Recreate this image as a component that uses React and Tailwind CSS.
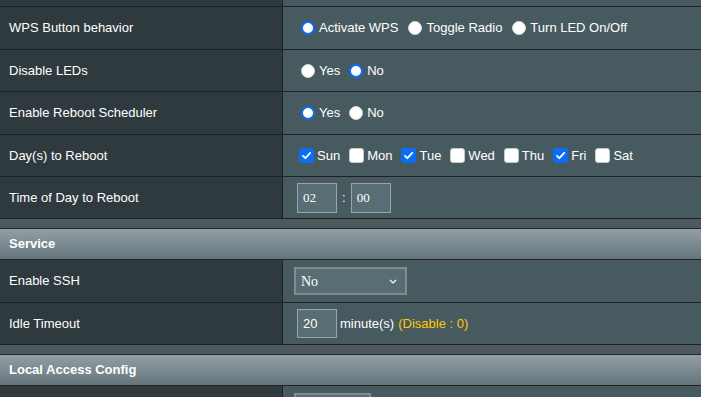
import React from 'react';

const days = [
  { name: 'Sun', on: true },
  { name: 'Mon', on: false },
  { name: 'Tue', on: true },
  { name: 'Wed', on: false },
  { name: 'Thu', on: false },
  { name: 'Fri', on: true },
  { name: 'Sat', on: false },
];

function Radio({ checked, label }) {
  return (
    <label className="flex items-center">
      {checked ? (
        <span className="w-[14px] h-[14px] rounded-full bg-white border-2 border-[#0b6cf4] box-border" />
      ) : (
        <span className="w-[14px] h-[14px] rounded-full bg-white border border-[#d6d6d6] box-border" />
      )}
      <span className="ml-[4px]">{label}</span>
    </label>
  );
}

function Check({ checked, label }) {
  return (
    <label className="flex items-center">
      {checked ? (
        <span className="w-[15px] h-[15px] rounded-[3px] bg-[#0b6cf4] flex items-center justify-center">
          <svg width="11" height="11" viewBox="0 0 11 11" fill="none">
            <path d="M2 5.8 L4.4 8.2 L9.2 2.8" stroke="white" strokeWidth="1.8" strokeLinecap="round" strokeLinejoin="round" />
          </svg>
        </span>
      ) : (
        <span className="w-[15px] h-[15px] rounded-[3px] bg-white border border-[#c9c9c9] box-border" />
      )}
      <span className="ml-[3px]">{label}</span>
    </label>
  );
}

function Row({ label, h, children, first }) {
  return (
    <div className={`flex ${first ? '' : 'border-t border-[#222]'} ${h}`}>
      <div className="w-[283px] shrink-0 bg-[#2f3a3e] border-r border-[#222] pl-[9px] flex items-center">
        {label}
      </div>
      <div className="flex-1 bg-[#475a5f] flex items-center">{children}</div>
    </div>
  );
}

function Header({ title }) {
  return (
    <div className="border-t border-[#222] h-[31px] bg-linear-to-b from-[#92a0a5] to-[#66757c] pl-[9px] flex items-center font-bold">
      {title}
    </div>
  );
}

function Gap() {
  return <div className="border-t border-[#222] h-[10px] bg-[#4d595d]" />;
}

export default function App() {
  return (
    <div className="w-[701px] h-[397px] overflow-hidden bg-[#4d595d] text-white text-[13px] font-['Liberation_Sans',Arial,sans-serif]">
      <Row first h="h-[6px]" label="" />

      <Row label="WPS Button behavior" h="h-[43px]">
        <div className="pl-[18px] flex items-center gap-[10px]">
          <Radio checked label="Activate WPS" />
          <Radio label="Toggle Radio" />
          <Radio label="Turn LED On/Off" />
        </div>
      </Row>

      <Row label="Disable LEDs" h="h-[42px]">
        <div className="pl-[18px] flex items-center gap-[9px]">
          <Radio label="Yes" />
          <Radio checked label="No" />
        </div>
      </Row>

      <Row label="Enable Reboot Scheduler" h="h-[43px]">
        <div className="pl-[18px] flex items-center gap-[9px]">
          <Radio checked label="Yes" />
          <Radio label="No" />
        </div>
      </Row>

      <Row label="Day(s) to Reboot" h="h-[42px]">
        <div className="pl-[16px] flex items-center gap-[9px]">
          {days.map((d) => (
            <Check key={d.name} checked={d.on} label={d.name} />
          ))}
        </div>
      </Row>

      <Row label="Time of Day to Reboot" h="h-[42px]">
        <div className="pl-[14px] flex items-center">
          <div className="w-[40px] h-[30px] border border-[#98a6aa] bg-[#596e74] pl-[5px] flex items-center font-['Liberation_Serif','Times_New_Roman',serif]">
            02
          </div>
          <span className="mx-[5px]">:</span>
          <div className="w-[40px] h-[30px] border border-[#98a6aa] bg-[#596e74] pl-[5px] flex items-center font-['Liberation_Serif','Times_New_Roman',serif]">
            00
          </div>
        </div>
      </Row>

      <Gap />
      <Header title="Service" />

      <Row label="Enable SSH" h="h-[43px]">
        <div className="pl-[11px] flex items-center">
          <div className="w-[113px] h-[28px] border-2 border-[#7f8c90] bg-[#596e74] pl-[5px] pr-[8px] flex items-center justify-between">
            <span className="text-[14px] font-['Liberation_Serif','Times_New_Roman',serif]">No</span>
            <svg width="8" height="5" viewBox="0 0 8 5" fill="none">
              <path d="M1 1 L4 4 L7 1" stroke="white" strokeWidth="1.2" />
            </svg>
          </div>
        </div>
      </Row>

      <Row label="Idle Timeout" h="h-[42px]">
        <div className="pl-[14px] flex items-center">
          <div className="w-[40px] h-[29px] border border-[#98a6aa] bg-[#596e74] pl-[5px] flex items-center">
            20
          </div>
          <span className="ml-[3px]">minute(s)</span>
          <span className="ml-[4px] text-[#ffcc00]">(Disable : 0)</span>
        </div>
      </Row>

      <Gap />
      <Header title="Local Access Config" />

      <Row label="" h="h-[20px]">
        <div className="pl-[11px] self-start pt-[7px]">
          <div className="w-[77px] h-[28px] border-2 border-[#7f8c90] bg-[#596e74]" />
        </div>
      </Row>
    </div>
  );
}
